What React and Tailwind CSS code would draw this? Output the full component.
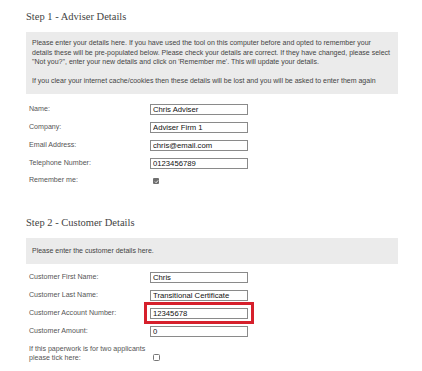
import React from "react";

const Field = ({ label, value, highlight }) => (
  <div className="flex h-[18px] items-center">
    <div className="w-[124px] pl-[3px] text-[7.1px] text-[#555]">{label}</div>
    <div className="relative">
      <input
        readOnly
        value={value}
        className="block h-[11px] w-[98px] border border-[#8a8a8a] bg-white px-[2px] text-[7.7px] leading-none text-[#111] outline-none"
      />
      {highlight && (
        <span className="pointer-events-none absolute -left-[6px] -right-[6px] -top-[6px] -bottom-[5px] border-[3px] border-[#d6202c]" />
      )}
    </div>
  </div>
);

const CheckRow = ({ label, checked }) => (
  <div className="flex min-h-[18px] items-center">
    <div className="w-[124px] pl-[3px] text-[7.1px] leading-[9.5px] text-[#555]">{label}</div>
    {checked ? (
      <span className="ml-[3px] flex h-[6px] w-[6px] items-center justify-center rounded-[1px] bg-[#6f6f6f]">
        <svg viewBox="0 0 10 10" className="h-[5px] w-[5px]">
          <path d="M2 5.2 L4.2 7.4 L8.2 2.8" fill="none" stroke="#fff" strokeWidth="1.8" />
        </svg>
      </span>
    ) : (
      <span className="ml-[3px] mt-[7px] h-[7px] w-[7px] rounded-[1.5px] border border-[#777] bg-white" />
    )}
  </div>
);

export default function App() {
  return (
    <div className="h-[371px] w-[422px] bg-white pl-[26px] pt-[11px] font-['Liberation_Sans',Arial,sans-serif]">
      <h2 className="h-[12px] font-['Liberation_Serif',serif] text-[10.5px] leading-[12px] text-[#444]">
        Step 1 - Adviser Details
      </h2>
      <div className="mt-[9px] w-[372px] bg-[#ebebeb] px-[6px] pb-[9px] pt-[6px] text-[7px] leading-[9.5px] text-[#444]">
        <p className="whitespace-nowrap">
          Please enter your details here. If you have used the tool on this computer before and opted to remember your
          <br />
          details these will be pre-populated below. Please check your details are correct. If they have changed, please select
          <br />
          "Not you?", enter your new details and click on 'Remember me'. This will update your details.
        </p>
        <p className="mt-[9px] whitespace-nowrap">
          If you clear your internet cache/cookies then these details will be lost and you will be asked to enter them again
        </p>
      </div>

      <div className="mt-[6px]">
        <Field label="Name:" value="Chris Adviser" />
        <Field label="Company:" value="Adviser Firm 1" />
        <Field label="Email Address:" value="chris@email.com" />
        <Field label="Telephone Number:" value="0123456789" />
        <CheckRow label="Remember me:" checked />
      </div>

      <h2 className="mt-[27px] h-[12px] font-['Liberation_Serif',serif] text-[10.5px] leading-[12px] text-[#444]">
        Step 2 - Customer Details
      </h2>
      <div className="mt-[9px] w-[372px] bg-[#ebebeb] px-[6px] py-[8px] text-[7px] leading-[9.5px] text-[#444]">
        Please enter the customer details here.
      </div>

      <div className="mt-[5px]">
        <Field label="Customer First Name:" value="Chris" />
        <Field label="Customer Last Name:" value="Transitional Certificate" />
        <Field label="Customer Account Number:" value="12345678" highlight />
        <Field label="Customer Amount:" value="0" />
        <div className="mt-[4px]">
          <CheckRow
            label={
              <>
                If this paperwork is for two applicants
                <br />
                please tick here:
              </>
            }
          />
        </div>
      </div>
    </div>
  );
}
